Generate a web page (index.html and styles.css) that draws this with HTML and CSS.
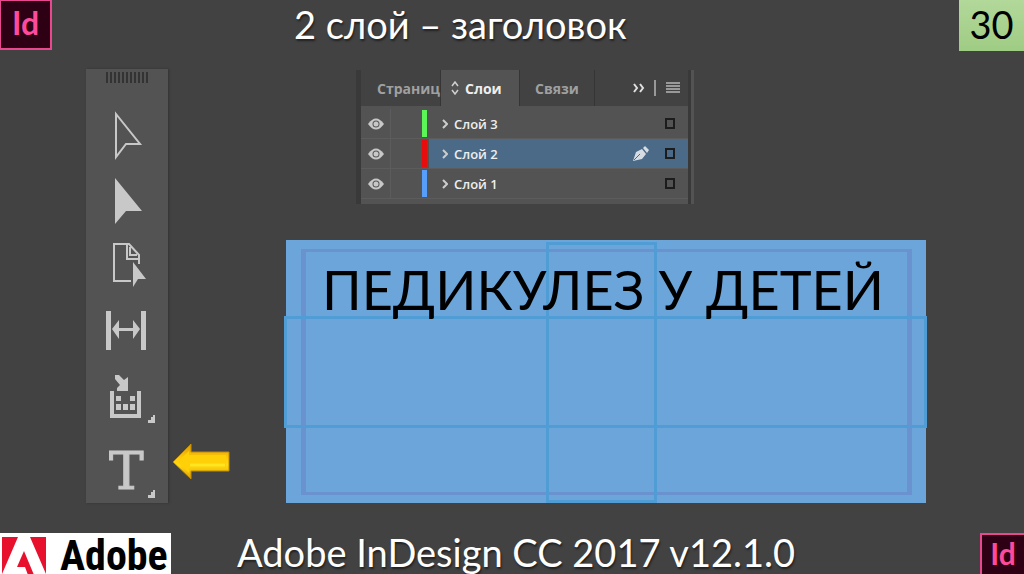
FILE: index.html
```html
<!DOCTYPE html>
<html lang="ru">
<head>
    <meta charset="UTF-8">
    <title>2 слой – заголовок</title>
    <link rel="stylesheet" href="styles.css">
</head>
<body>
    <header>
        <div class="id-logo">Id</div>
        <h1>2 слой – заголовок</h1>
        <div class="page-number">30</div>
    </header>

    <main>
        <div class="toolbar">
            <div class="grip"></div>
            <button aria-label="Выделение">
                <svg viewBox="0 0 82 66"><path d="M30 12V55L40 42H54Z" fill="none" stroke="#c8c8c8" stroke-width="2"/></svg>
            </button>
            <button aria-label="Прямое выделение">
                <svg viewBox="0 0 82 66"><path d="M29 10V56L40 43H56Z"/></svg>
            </button>
            <button aria-label="Страница">
                <svg viewBox="0 0 82 66">
                    <path d="M45 47H28V10H43L53 21V30M41 10V25H53M44 13V21H51" fill="none" stroke="#c8c8c8" stroke-width="2"/>
                    <path d="M47 28V53L52 45H60Z"/>
                </svg>
            </button>
            <button aria-label="Зазор">
                <svg viewBox="0 0 82 66"><path d="M20 11H25V50H20ZM55 11H60V50H55ZM26 29L33 20V28H47V20L54 29L47 39V31H33V39Z"/></svg>
            </button>
            <button aria-label="Сбор материалов">
                <svg viewBox="0 0 82 66">
                    <path d="M24 25H28V48H51V25H55V52H24ZM30 30H35V35H30ZM44 30H49V35H44ZM30 38H35V44H30ZM37 38H42V44H37ZM44 38H49V44H44Z"/>
                    <path d="M29 9H33L38 14L42 11V25H31V22L34 19L29 13Z"/>
                    <path d="M69 49V57H62V54H65V51H67V49Z"/>
                </svg>
            </button>
            <button class="type" aria-label="Текст">
                <span>T</span>
                <svg width="7" height="8" viewBox="62 57 7 8"><path d="M69 57V65H62V62H65V59H67V57Z"/></svg>
            </button>
        </div>

        <svg class="arrow" viewBox="0 0 58 38">
            <defs>
                <linearGradient id="gold" x1="0" y1="0" x2="0" y2="1">
                    <stop offset="0" stop-color="#d99a00"/>
                    <stop offset="0.4" stop-color="#ffc90a"/>
                    <stop offset="0.6" stop-color="#ffdb10"/>
                    <stop offset="1" stop-color="#e0a000"/>
                </linearGradient>
            </defs>
            <path d="M1 19L19 1V9H57V28H19V36Z" fill="url(#gold)" stroke="#bd8b08"/>
            <path d="M5 19L17 8V12H54V25H17V30Z" fill="#ffcf08"/>
            <path d="M18 22H53" stroke="#ffe620" stroke-width="3"/>
        </svg>

        <div class="work">
            <div class="panel">
                <div class="tabs">
                    <button class="tab pages">Страниц</button>
                    <button class="tab active">
                        <svg width="8" height="14" viewBox="0 0 8 14"><path d="M1 5L4 1L7 5M1 9L4 13L7 9" fill="none" stroke="#d0d0d0" stroke-width="1.5"/></svg>
                        Слои
                    </button>
                    <button class="tab links">Связи</button>
                    <button class="tool collapse" aria-label="Свернуть">
                        <svg width="14" height="10" viewBox="0 0 14 10"><path d="M2 1L5 5L2 9M8 1L11 5L8 9" fill="none" stroke="#e0e0e0" stroke-width="2"/></svg>
                    </button>
                    <button class="tool menu" aria-label="Меню панели">
                        <svg width="14" height="12" viewBox="0 0 14 12"><path d="M0 1H14M0 4H14M0 7H14M0 10H14" stroke="#999" stroke-width="2"/></svg>
                    </button>
                </div>
                <div class="layers">
                    <div class="layer green">
                        <button class="eye" aria-label="Видимость"><svg width="16" height="12" viewBox="0 0 16 12"><path d="M0 6Q8 -5 16 6Q8 17 0 6Z"/><circle cx="8" cy="6" r="3.5" fill="#555"/><circle cx="8" cy="6" r="2.5"/></svg></button>
                        <span class="lock"></span>
                        <span class="mark"></span>
                        <label class="name" for="layer3"><svg width="6" height="10" viewBox="0 0 6 10"><path d="M1 1L5 5L1 9" fill="none" stroke="#ccc" stroke-width="2"/></svg>Слой 3</label>
                        <input type="checkbox" id="layer3">
                    </div>
                    <div class="layer red selected">
                        <button class="eye" aria-label="Видимость"><svg width="16" height="12" viewBox="0 0 16 12"><path d="M0 6Q8 -5 16 6Q8 17 0 6Z"/><circle cx="8" cy="6" r="3.5" fill="#555"/><circle cx="8" cy="6" r="2.5"/></svg></button>
                        <span class="lock"></span>
                        <span class="mark"></span>
                        <label class="name" for="layer2"><svg width="6" height="10" viewBox="0 0 6 10"><path d="M1 1L5 5L1 9" fill="none" stroke="#ccc" stroke-width="2"/></svg>Слой 2</label>
                        <svg class="pen" width="16" height="16" viewBox="0 0 16 16"><path d="M0 15L3 6L9 3L13 8L9 13ZM10 2L12 0L16 4L14 7Z" fill="#d5dce4"/><path d="M1 14L7 8" stroke="#4b6a87"/></svg>
                        <input type="checkbox" id="layer2">
                    </div>
                    <div class="layer blue">
                        <button class="eye" aria-label="Видимость"><svg width="16" height="12" viewBox="0 0 16 12"><path d="M0 6Q8 -5 16 6Q8 17 0 6Z"/><circle cx="8" cy="6" r="3.5" fill="#555"/><circle cx="8" cy="6" r="2.5"/></svg></button>
                        <span class="lock"></span>
                        <span class="mark"></span>
                        <label class="name" for="layer1"><svg width="6" height="10" viewBox="0 0 6 10"><path d="M1 1L5 5L1 9" fill="none" stroke="#ccc" stroke-width="2"/></svg>Слой 1</label>
                        <input type="checkbox" id="layer1">
                    </div>
                </div>
            </div>

            <div class="sheet">
                <div class="margins"></div>
                <div class="guide vertical"></div>
                <div class="guide horizontal"></div>
                <h2>ПЕДИКУЛЕЗ У ДЕТЕЙ</h2>
            </div>
        </div>
    </main>

    <footer>
        <div class="adobe">
            <svg width="44" height="37" viewBox="0 0 44 37"><path d="M0 0H16L0 37ZM28 0H44V37ZM22 14L32 38H26L23 30H15Z" fill="#e8112d"/></svg>
            <span>Adobe</span>
        </div>
        <p>Adobe InDesign CC 2017 v12.1.0</p>
        <div class="id-logo small">Id</div>
    </footer>
</body>
</html>
```
FILE: styles.css
```css
* {
    box-sizing: border-box;
}
body {
    margin: 0;
    min-height: 100vh;
    display: flex;
    flex-direction: column;
    background-color: #424242;
    color: white;
    font-family: Lato, "Noto Sans", sans-serif;
}
button {
    padding: 0;
    border: none;
    background: none;
    color: inherit;
    font: inherit;
    cursor: pointer;
}
svg {
    display: block;
    flex-shrink: 0;
}

header, footer {
    display: flex;
    justify-content: space-between;
}
header {
    height: 51px;
}
h1, footer p {
    margin: 0;
    font-size: 38px;
    font-weight: normal;
    line-height: 48px;
    white-space: nowrap;
    text-shadow: 1px 2px 2px #222;
}
h1 {
    flex: 1;
    padding-left: 242px;
}
.id-logo {
    width: 52px;
    height: 50px;
    border: 2px solid #e8488f;
    border-left-width: 1px;
    border-top-width: 1px;
    background-color: #2e0014;
    color: #ff4a9c;
    font-size: 32px;
    font-weight: bold;
    line-height: 44px;
    text-align: center;
}
.page-number {
    width: 65px;
    background: linear-gradient(#b2d89a, #9fcc84);
    color: black;
    font-size: 38px;
    line-height: 48px;
    text-align: center;
}

main {
    flex: 1;
    display: flex;
    align-items: flex-start;
    padding: 18px 98px 30px 86px;
}
.toolbar {
    width: 82px;
    height: 434px;
    background-color: #535353;
    box-shadow: 1px 0 2px #333;
}
.grip {
    width: 46px;
    height: 11px;
    margin: 3px auto 19px;
    border: solid #535353;
    border-width: 0 2px;
    background: repeating-linear-gradient(90deg, #333 0 2px, #535353 2px 4px);
}
.toolbar button {
    display: block;
    width: 82px;
    height: 66px;
}
.toolbar svg {
    fill: #c8c8c8;
}
.toolbar .type {
    display: flex;
    align-items: flex-end;
    gap: 4px;
    padding-left: 23px;
    color: #c8c8c8;
    font-family: "DejaVu Serif", serif;
    font-size: 52px;
    line-height: 54px;
    -webkit-text-stroke: 1px #c8c8c8;
}
.arrow {
    width: 58px;
    margin: 374px 56px 0 4px;
}
.work {
    flex: 1;
}

.panel {
    width: 338px;
    height: 134px;
    margin: 1px 0 36px 70px;
    border-left: 5px solid #393939;
    border-right: 3px solid #535353;
    padding-right: 3px;
    background-color: #393939;
    font-family: "Open Sans", "Noto Sans", sans-serif;
    font-weight: bold;
}
.tabs {
    display: flex;
    height: 36px;
    background-color: #424242;
}
.tab {
    border-right: 1px solid #353535;
    color: #a0a0a0;
    font-size: 14px;
}
.pages {
    width: 80px;
    padding-left: 16px;
    text-align: left;
}
.active {
    display: flex;
    align-items: center;
    gap: 6px;
    width: 79px;
    padding-left: 10px;
    background-color: #535353;
    color: #eee;
}
.links {
    width: 75px;
}
.collapse {
    margin: 10px 8px 10px auto;
}
.menu {
    margin: 10px 8px 10px 0;
    padding-left: 10px;
    border-left: 2px solid #999;
}
.layers {
    height: 98px;
    padding-top: 3px;
    background-color: #535353;
}
.layer {
    display: flex;
    align-items: center;
    height: 30px;
    padding-right: 13px;
    border-bottom: 1px solid #5c5c5c;
}
.eye {
    width: 30px;
    height: 29px;
    padding-left: 7px;
    border-right: 1px solid #5c5c5c;
}
.eye svg {
    fill: #c8c8c8;
}
.lock {
    width: 31px;
}
.mark {
    width: 5px;
    height: 27px;
}
.green .mark {
    background-color: #5cf558;
}
.red .mark {
    background-color: #e80c0c;
}
.blue .mark {
    background-color: #579dfa;
}
.selected {
    background: linear-gradient(90deg, #535353 68px, #4b6a87 68px);
}
.name {
    flex: 1;
    display: flex;
    align-items: center;
    gap: 6px;
    padding-left: 15px;
    color: #eee;
    font-size: 13px;
    font-weight: 600;
}
.pen {
    margin-right: 16px;
}
.layer input {
    appearance: none;
    width: 10px;
    height: 11px;
    margin: 0;
    border: 2px solid #1c1c1c;
}

/* разворот с полями и направляющими */
.sheet {
    position: relative;
    height: 263px;
    padding-top: 14px;
    background-color: #6ca5da;
}
.margins {
    position: absolute;
    inset: 9px 14px 8px 15px;
    border: solid #6a92cf;
    border-width: 3px 5px;
}
.guide {
    position: absolute;
    border: 3px solid #509dd6;
}
.vertical {
    top: 2px;
    bottom: 0;
    left: 260px;
    width: 111px;
}
.horizontal {
    top: 76px;
    left: -2px;
    right: -1px;
    height: 112px;
}
h2 {
    position: relative;
    margin: 0;
    padding-right: 6px;
    color: black;
    font-size: 54px;
    font-weight: normal;
    line-height: 72px;
    text-align: center;
    white-space: nowrap;
}

footer {
    height: 41px;
}
.adobe {
    display: flex;
    gap: 14px;
    width: 171px;
    padding: 4px 0 0 2px;
    background-color: white;
    color: black;
}
.adobe span {
    font-family: "Roboto Condensed", Roboto, sans-serif;
    font-size: 42px;
    font-weight: bold;
    line-height: 37px;
}
footer p {
    flex: 1;
    padding-left: 66px;
    line-height: 38px;
}
.small {
    width: 44px;
    height: 41px;
    border-width: 2px 0 0 2px;
    font-size: 30px;
    line-height: 36px;
}
```
